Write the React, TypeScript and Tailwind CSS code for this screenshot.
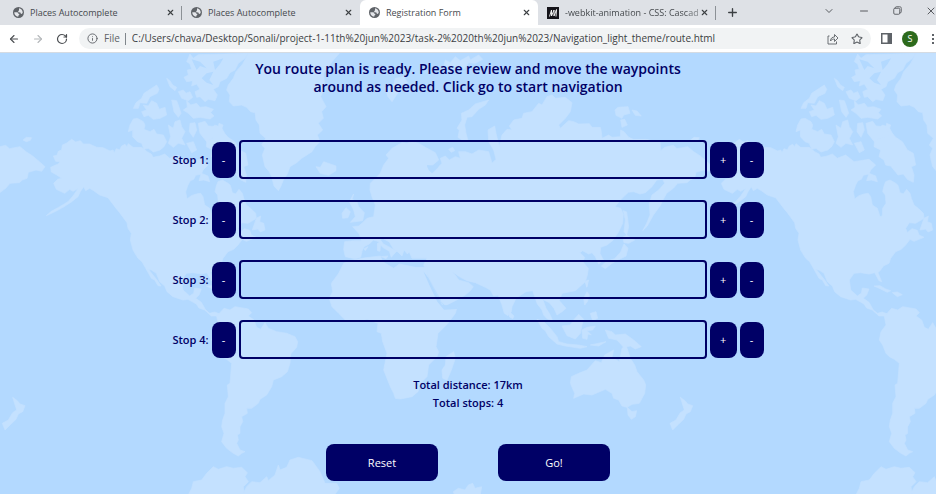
import { ArrowLeft, ArrowRight, ChevronDown, Info, Minus, Plus, RotateCw, Star, X } from "lucide-react";

const OPEN_TABS = [
  { title: "Places Autocomplete", icon: "globe", active: false },
  { title: "Places Autocomplete", icon: "globe", active: false },
  { title: "Registration Form", icon: "globe", active: true },
  { title: "-webkit-animation - CSS: Cascad", icon: "mdn", active: false },
];

const STOPS = [1, 2, 3, 4];

function Globe() {
  return (
    <svg viewBox="0 0 22 22" className="size-[11px] shrink-0" aria-hidden="true">
      <circle cx="11" cy="11" r="11" fill="#5f6368" />
      <path d="M2.500 10.500h5c2 0 3 1 3 3h2v2.500c-1 0-2 1-2 3.500-5-.5-8-4-8-9zM12 2.500c4 .5 7 3.500 7.500 8-.5 2-1.500 3.500-3 3.500s-1-2.500-2-3-3.500 0-4-1.500 0-2 1.500-2.500V4.500z" fill="#e4e6ea" />
    </svg>
  );
}

function MdnIcon() {
  return (
    <svg viewBox="0 0 24 24" className="size-3 shrink-0" aria-hidden="true">
      <rect width="24" height="24" fill="#15141a" />
      <path d="M5 19 9 6v12l5-12v12l5-13-1 14" fill="none" stroke="#fff" strokeWidth="1.8" />
    </svg>
  );
}

function ShareIcon() {
  return (
    <svg viewBox="0 0 24 24" className="size-3" fill="none" stroke="#5f6368" strokeWidth="1.8" aria-hidden="true">
      <path d="M5 6H2v16h17v-5M7 16c0-6 4-8 8-8V3l7 7-7 7v-5c-4 0-6 1-8 4z" />
    </svg>
  );
}

function BrowserTab({ title, icon, active }: { title: string; icon: string; active: boolean }) {
  return (
    <div
      className={
        active
          ? "flex w-[178px] items-center rounded-t-[6px] bg-white pl-[9px] pr-[7px]"
          : "flex w-[178px] items-center pl-[9px] pr-[7px]"
      }
    >
      {icon === "globe" ? <Globe /> : <MdnIcon />}
      <button
        type="button"
        className={
          icon === "globe"
            ? "ml-1.5 min-w-0 flex-1 whitespace-nowrap text-left text-[9px] text-[#45494d]"
            : "ml-1.5 min-w-0 flex-1 whitespace-nowrap text-left text-[9px] text-[#45494d] [mask-image:linear-gradient(to_right,black_88%,transparent_110%)]"
        }
      >
        {title}
      </button>
      <button type="button" aria-label="Close tab">
        <X className="size-[9px] text-[#3c4043]" strokeWidth={3} />
      </button>
    </div>
  );
}

function BrowserChrome() {
  return (
    <header className="border-b border-[#d5dbe2] text-[#5f6368]">
      <div className="flex h-[25px] bg-[#dee1e6]">
        <nav aria-label="Tabs" className="flex pl-1">
          {OPEN_TABS.map((tab, i) => (
            <div key={i} className="relative flex">
              <BrowserTab {...tab} />
              {(i === 0 || i === 3) && <span className="absolute right-0 top-[6px] h-[14px] w-px bg-[#8c9196]" />}
            </div>
          ))}
        </nav>
        <button type="button" aria-label="New tab" className="ml-2.5">
          <Plus className="size-[13px] text-[#3c4043]" strokeWidth={2.5} />
        </button>
        <div className="ml-auto flex h-[21px] items-center gap-[23px] overflow-hidden text-[#4a4d51]">
          <button type="button" aria-label="Search tabs"><ChevronDown className="size-3" strokeWidth={1.8} /></button>
          <button type="button" aria-label="Minimize"><Minus className="size-3" strokeWidth={1.8} /></button>
          <button type="button" aria-label="Restore">
            <svg viewBox="0 0 24 24" className="size-[9px]" fill="none" stroke="currentColor" strokeWidth="2.2">
              <rect x="2" y="6" width="16" height="16" rx="3" />
              <path d="M6 6c0-3 1-4 3-4h8c4 0 5 1 5 5v8c0 3-1 3-4 3" />
            </svg>
          </button>
          <button type="button" aria-label="Close window" className="-mr-px"><X className="size-3" strokeWidth={1.8} /></button>
        </div>
      </div>
      <div className="flex h-[27px] items-center bg-white pl-2">
        <div className="flex items-center gap-3">
          <button type="button" aria-label="Back"><ArrowLeft className="size-3 text-[#4a4d51]" strokeWidth={2.2} /></button>
          <button type="button" aria-label="Forward"><ArrowRight className="size-3 text-[#b4b7ba]" strokeWidth={2.2} /></button>
          <button type="button" aria-label="Reload"><RotateCw className="size-3 text-[#4a4d51]" strokeWidth={2.4} /></button>
        </div>
        <div className="ml-[11px] flex h-[21px] min-w-0 flex-1 items-center rounded-full bg-[#f1f3f4] pl-2 pr-2 text-[10px]">
          <Info className="size-[11px] shrink-0" strokeWidth={2} />
          <label htmlFor="address" className="ml-1.5">File</label>
          <span className="ml-[5px] h-3 w-px bg-[#80868b]" />
          <input
            id="address"
            type="text"
            readOnly
            className="ml-1.5 min-w-0 flex-1 bg-transparent text-[#3c4043] outline-none"
            value="C:/Users/chava/Desktop/Sonali/project-1-11th%20jun%2023/task-2%2020th%20jun%2023/Navigation_light_theme/route.html"
          />
          <button type="button" aria-label="Share"><ShareIcon /></button>
          <button type="button" aria-label="Bookmark" className="ml-3"><Star className="size-3" strokeWidth={2.2} /></button>
        </div>
        <button type="button" aria-label="Side panel" className="ml-2.5">
          <svg viewBox="0 0 22 22" className="size-[11px]">
            <path d="M1.500 1.500h19v19h-19z" fill="none" stroke="#5f6368" strokeWidth="3" />
            <path d="M13 2h8v18h-8z" fill="#5f6368" />
          </svg>
        </button>
        <button type="button" className="ml-2.5 size-4 rounded-full bg-[#2d6a1c] text-[9px] text-white">S</button>
        <button type="button" aria-label="Menu" className="ml-3.5 mr-0.5 flex flex-col gap-0.5">
          <span className="size-0.5 bg-[#5f6368]" />
          <span className="size-0.5 bg-[#5f6368]" />
          <span className="size-0.5 bg-[#5f6368]" />
        </button>
      </div>
    </header>
  );
}

function WorldMap() {
  return (
    <svg
      className="absolute inset-0 h-full w-full"
      viewBox="0 159 2808 1323"
      preserveAspectRatio="xMinYMin slice"
      fill="#c4e1ff"
      stroke="#c4e1ff"
      strokeWidth="2"
      strokeLinejoin="round"
      aria-hidden="true"
    >
      <defs>
        <g id="world">
          {/* North America */}
          <g transform="translate(-131 150)">
            <path d="M283 352L296 346 306 342 311 335 298 334 291 318 302 316 306 304 316 300 318 285 330 280 346 268 358 276 372 272 381 282 400 282 421 292 440 293 461 303 470 300 474 308 480 296 490 300 496 288 506 283 512 290 516 281 530 292 556 292 572 305 585 312 590 322 610 318 625 312 640 325 665 315 690 335 735 328 755 345 740 360 735 372 718 376 712 388 702 392 695 405 688 425 692 447 705 437 720 432 733 430 740 440 745 465 760 475 768 500 775 498 776 475 786 460 784 435 776 425 780 408 785 395 798 390 815 400 822 406 828 428 838 432 848 418 858 430 862 445 870 465 884 476 898 490 900 505 875 520 856 518 845 535 850 548 864 536 880 541 885 555 900 562 870 574 858 568 845 585 832 598 815 605 800 625 795 640 778 648 770 660 762 668 773 695 765 692 752 668 735 672 710 668 690 670 676 690 680 720 700 738 712 730 715 714 735 717 728 735 718 745 735 757 748 780 760 790 775 786 790 792 785 798 765 798 745 780 728 774 720 762 695 748 680 750 650 740 632 725 625 708 610 695 600 670 585 660 570 658 557 635 545 625 530 600 522 570 525 550 515 535 512 518 490 488 480 476 455 443 430 435 412 422 400 415 388 422 382 410 372 425 365 440 345 456 320 472 298 484 270 497 285 484 310 470 335 455 350 438 366 415 350 424 340 418 325 430 300 418 292 400 304 388 316 385 300 374 285 366Z" />
            <path d="M570 658L578 660 590 675 602 690 614 708 605 707 595 690 585 685ZM750 708L768 707 785 717 800 722 790 727 770 717ZM805 728L820 726 835 734 820 740ZM893 525L900 505 913 498 910 515 922 520 926 540 912 546 905 537 888 540Z" />
            <path d="M750 230L765 238 775 225 795 232 805 250 815 262 835 275 850 300 868 310 875 345 862 350 870 375 868 397 850 388 838 372 822 375 800 348 785 345 780 330 765 320 770 300 750 290 752 270 770 265 755 250ZM735 370L755 378 760 395 742 390 728 392Z" />
            <path d="M200 365L210 357 226 358 222 366 210 370ZM788 315L800 320 796 332 786 328Z" transform="translate(0 -95)" />
          </g>
          {/* Arctic archipelago and Greenland */}
          <g transform="translate(0 150)">
            <path d="M400 207L412 205 430 215 435 225 432 238 450 245 462 238 470 252 490 255 500 275 492 290 480 300 460 306 445 295 432 298 425 280 412 275 398 260 398 240 385 245 390 225Z" />
            <path d="M400 175L408 158 425 145 432 130 455 115 470 105 477 118 472 130 450 140 440 160 420 158 415 175ZM430 165L445 168 455 152 470 160 478 178 495 172 500 195 480 205 460 208 445 196 432 200 425 185 440 180ZM500 85L510 92 518 105 530 112 525 122 510 110ZM535 125L550 120 558 130 570 125 578 142 565 152 545 145Z" />
            <path d="M515 150L530 152 535 165 543 190 535 202 522 185ZM560 152L572 165 590 160 600 172 618 170 640 178 632 188 642 198 630 207 600 202 580 205 565 190 550 180 562 172ZM505 225L520 235 525 215 540 210 545 230 555 245 545 265 555 285 535 280 520 292 505 280 512 260ZM570 220L585 218 590 240 580 262 568 245ZM595 220L615 214 625 228 650 230 665 250 660 265 640 262 620 275 600 250ZM560 280L580 275 590 300 575 308Z" />
            <path d="M570 12L580 25 595 14 745 10 735 25 715 40 705 60 690 68 680 85 660 95 655 110 640 118 652 135 645 152 625 148 615 155 600 140 590 142 585 125 600 118 590 102 575 108 578 92 560 95 552 82 565 75 562 60 575 58 570 42 560 35Z" />
            <path d="M745 10L728 42 708 65 700 85 685 105 680 120 690 135 688 155 700 168 725 165 740 172 752 185 765 188 768 210 778 225 780 250 797 265 785 285 795 295 787 315 795 350 808 365 815 380 822 408 835 422 842 410 850 390 862 372 870 350 890 338 905 325 936 305 945 290 960 275 952 255 968 240 955 220 970 205 965 185 978 170 962 140 975 110 970 70 985 50 1000 30 1018 10Z" />
          </g>
          <g transform="translate(0 150)" fill="#b3d9ff" stroke="none">
            <path d="M575 28L600 35 620 55 600 48 590 60ZM620 70L640 65 628 90 640 105 620 98 605 85ZM640 35L670 25 660 42 645 60Z" />
          </g>
          {/* Eurasia */}
          <g transform="translate(936 150)">
            <path d="M180 440L174 420 175 400 190 385 205 370 215 345 230 325 222 315 240 295 270 278 285 280 300 275 320 280 340 292 370 308 380 330 362 345 345 345 345 352 362 368 380 350 390 340 385 325 400 318 412 330 430 320 445 325 440 305 460 305 480 312 500 300 530 305 540 340 552 328 545 300 530 275 528 240 548 228 552 250 562 290 570 255 585 238 600 240 592 228 605 210 630 205 635 190 660 185 680 160 690 165 705 140 720 135 730 145 760 142 780 158 775 185 760 205 740 225 745 235 770 212 785 215 800 222 832 221 840 232 865 232 868 245 870 265 890 255 900 262 925 260 926 240 936 245 950 262 964 268 1000 268 1044 276 1046 302 1058 292 1084 286 1095 296 1127 290 1145 305 1165 318 1185 335 1202 350 1192 364 1175 360 1152 367 1148 385 1134 390 1125 398 1097 400 1084 415 1064 430 1054 448 1044 468 1024 495 1006 528 992 542 1004 520 1014 495 1012 460 1020 435 1040 420 1058 400 1052 388 1034 390 1020 410 1000 428 984 432 965 425 949 427 930 445 909 470 926 475 934 492 932 520 920 545 904 570 885 585 866 592 864 610 874 630 860 642 850 620 840 608 830 612 812 602 804 608 818 622 812 635 829 655 826 675 820 695 790 722 750 730 742 752 762 775 750 785 735 795 726 775 712 758 692 748 702 775 712 790 722 812 705 806 695 795 690 780 676 762 662 722 642 725 612 745 600 770 598 785 588 797 577 790 570 765 558 735 545 738 535 720 520 712 490 698 465 692 445 682 420 665 432 678 440 690 470 698 484 710 475 722 460 735 430 752 400 767 388 755 385 745 365 710 345 670 335 645 345 625 300 625 292 606 286 612 276 600 270 618 258 606 244 596 232 576 214 566 204 568 214 582 230 590 254 604 246 612 238 622 232 604 212 592 198 574 184 570 172 582 156 590 150 604 146 622 128 626 100 620 95 598 98 575 125 572 148 572 142 552 122 530 140 528 150 520 165 505 185 500 190 465Z" />
            <path d="M530 150L520 165 500 178 480 200 465 202 458 225 462 250 468 272 450 270 438 262 442 240 435 235 450 210 448 190 470 180 490 162Z" />
            <path d="M400 30L415 38 430 20 445 32 470 18 475 30 500 15 512 28 490 40 470 38 455 58 430 48 420 58 395 50ZM220 112L245 105 250 85 275 80 287 98 265 105 260 125 240 155 228 140ZM12 350L25 352 35 335 55 342 72 348 72 362 50 376 25 370ZM125 432L120 448 135 455 140 470 157 488 152 512 115 517 130 500 125 480 112 455ZM90 490L102 473 115 485 108 503 92 505ZM909 180L918 172 948 170 954 190 935 195 930 205 912 196ZM926 210L938 208 946 225 930 232ZM960 180L975 183 988 198 970 196ZM410 298L422 292 428 302 418 307Z" />
            {/* Sakhalin, Japan and Taiwan */}
            <path d="M934 482L944 486 950 530 944 555 936 545 940 510ZM932 562L944 556 968 570 950 580 936 578ZM936 582L948 595 942 618 918 630 900 640 880 656 868 648 884 634 908 626 926 606ZM820 695L828 690 824 712Z" />
            <path d="M156 596L168 590 160 602ZM196 580L206 578 204 604 196 602ZM208 620L228 618 222 626Z" />
            {/* Africa */}
            <path d="M95 640L110 632 155 624 205 618 212 635 245 655 262 642 310 652 345 652 345 672 362 710 385 755 398 772 435 772 430 790 408 820 378 850 372 890 380 905 375 920 350 945 345 980 325 1000 318 1025 300 1040 265 1047 250 1045 245 1030 235 1010 215 960 225 910 212 875 208 850 195 845 198 820 165 808 140 815 105 815 80 790 60 770 52 745 62 725 58 700 80 670Z" />
            <path d="M425 905L430 925 418 960 405 990 392 985 390 960 400 945 402 920ZM592 785L606 798 602 806 592 800Z" />
          </g>
          <g transform="translate(936 150)" fill="#b3d9ff" stroke="none">
            <path d="M334 664L350 685 372 730 390 764 436 770 436 777 396 779 376 755 352 705ZM345 345L365 352 380 340 378 352 360 370 350 360Z" />
          </g>
          {/* South-east Asia and Oceania */}
          <g transform="translate(936 810)">
            <path d="M675 148L695 155 715 175 735 200 740 215 765 222 800 225 825 230 805 235 760 228 735 222 710 200 700 182 690 175ZM750 168L775 165 785 150 800 133 815 148 810 165 805 190 790 207 765 197ZM810 180L825 172 850 168 842 180 825 182 838 195 828 192 825 208 812 205ZM825 65L832 75 826 95 818 105 815 85ZM820 35L830 30 825 50ZM835 130L852 125 857 145 842 152ZM835 225L882 215 860 228ZM880 180L900 185 910 195 940 192 965 210 988 230 970 237 955 228 935 232 915 210 890 205ZM722 110L738 108 735 118Z" />
            <path d="M785 385L788 370 775 340 778 320 800 310 825 300 850 272 868 278 878 255 905 240 900 262 922 275 930 235 942 225 955 265 968 285 975 305 995 330 1001 345 998 370 982 400 960 403 945 412 930 408 920 390 905 385 900 370 880 358 840 375 815 372ZM946 412L960 425 974 422 970 440 958 448 948 435Z" />
          </g>
          {/* New Zealand and South America */}
          <g transform="translate(0 810)">
            <path d="M38 382L52 392 60 402 75 407 68 425 55 432 48 448 30 465 15 480 7 460 25 450 38 428 50 420Z" />
            <path d="M650 138L660 128 672 115 690 120 705 110 745 117 755 128 745 138 762 150 770 172 782 178 795 158 805 175 830 185 860 190 885 200 893 215 890 232 872 252 870 280 862 305 845 320 820 330 815 350 800 375 780 388 775 400 755 415 740 415 742 430 725 440 728 455 720 470 720 490 712 495 715 510 710 520 720 540 735 545 725 550 715 558 700 550 680 535 665 515 672 490 665 470 668 450 675 430 675 400 685 380 682 345 690 340 695 280 680 268 665 260 655 250 645 225 635 210 640 185 655 165Z" />
            {/* Northern coastline of the next row of tiles */}
            <path d="M562 680L575 655 580 635 605 630 620 610 640 590 655 598 680 590 700 595 725 592 742 608 735 620 745 635 730 650 735 680ZM725 680L740 650 755 635 780 638 800 620 805 632 825 615 835 585 840 600 860 592 870 570 895 562 936 572 960 605 975 640 1010 640 1018 655 1000 680ZM1360 665L1375 655 1395 660 1405 645 1418 640 1425 655 1445 650 1440 680 1365 680Z" />
          </g>
        </g>
      </defs>
      <use href="#world" x="-2003" />
      <use href="#world" />
      <use href="#world" x="2003" />
    </svg>
  );
}

function StopRow({ stop }: { stop: number }) {
  const square = "h-9 w-6 rounded-lg bg-[#000066] font-normal text-white";
  return (
    <div className="flex items-center justify-center">
      <label htmlFor={`stop-${stop}`} className="mr-[3px] whitespace-nowrap">Stop {stop}:</label>
      <button type="button" aria-label={`Move stop ${stop}`} className={square}>-</button>
      <input
        id={`stop-${stop}`}
        type="text"
        className="mx-[3px] h-[39px] w-1/2 rounded-[4px] border-2 border-[#000066] bg-transparent px-2 outline-none"
      />
      <button type="button" aria-label={`Add after stop ${stop}`} className="mr-[3px] h-9 w-[27px] rounded-lg bg-[#000066] font-normal text-white">+</button>
      <button type="button" aria-label={`Remove stop ${stop}`} className={square}>-</button>
    </div>
  );
}

export default function App() {
  return (
    <div className="flex min-h-screen flex-col font-['Open_Sans','Noto_Sans',sans-serif]">
      <BrowserChrome />
      <main className="relative flex-1 overflow-hidden bg-[#b3d9ff] text-[#000066]">
        <WorldMap />
        <div className="relative flex flex-col pb-3 pt-[7px] text-[11px] font-semibold leading-[18px]">
          <h1 className="mx-auto max-w-[460px] text-center text-[14px]">
            You route plan is ready. Please review and move the waypoints around as needed. Click go to start navigation
          </h1>
          <form className="mt-11 flex flex-col gap-[21px]">
            {STOPS.map((stop) => (
              <StopRow key={stop} stop={stop} />
            ))}
          </form>
          <div className="mt-[17px] text-center">
            <p>Total distance: 17km</p>
            <p>Total stops: 4</p>
          </div>
          <div className="mt-8 flex justify-center gap-[60px] text-white">
            <button type="button" className="h-[37px] w-28 rounded-lg bg-[#000066] font-normal">Reset</button>
            <button type="button" className="h-[37px] w-28 rounded-lg bg-[#000066] font-normal">Go!</button>
          </div>
        </div>
      </main>
    </div>
  );
}
